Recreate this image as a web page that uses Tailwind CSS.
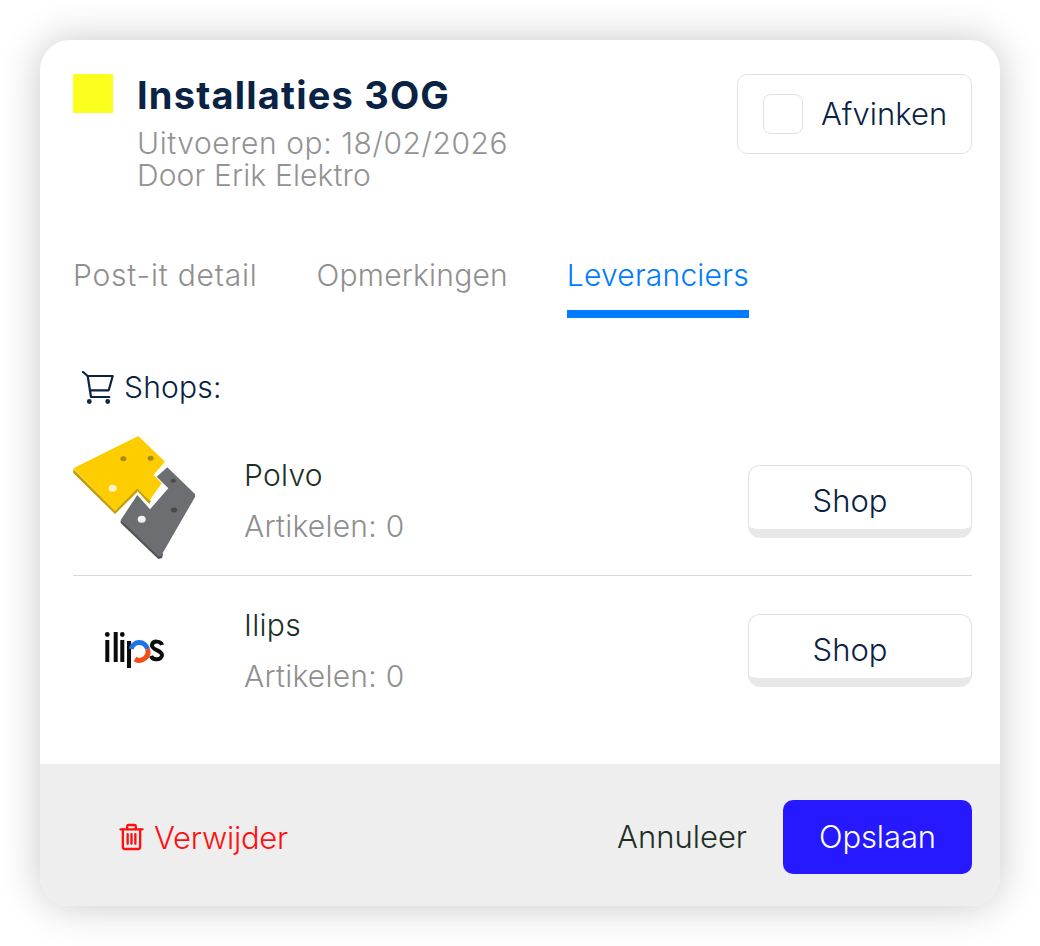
<!DOCTYPE html>
<html lang="en">
<head>
    <meta charset="UTF-8">
    <title>Post-it detail</title>
    <script src="https://cdn.jsdelivr.net/npm/@tailwindcss/browser@4"></script>
</head>
<body class="bg-white w-[1040px] h-[946px] overflow-hidden font-['Inter','Liberation_Sans',sans-serif]">
    <div class="pt-[40px] pl-[40px]">
        <div class="w-[960px] h-[866px] bg-white rounded-[30px] shadow-[0_0_40px_rgba(0,0,0,0.22)] overflow-hidden flex flex-col">
            <!-- Header -->
            <div class="flex justify-between pl-[33px] pr-[28px] pt-[34px] h-[190px]">
                <div class="flex gap-[24px]">
                    <div class="w-[40px] h-[39px] bg-[#fbff1e]"></div>
                    <div>
                        <h1 class="text-[38px] leading-[42px] font-bold text-[#0a2243] tracking-[1.2px]">Installaties 3OG</h1>
                        <p class="mt-[11px] text-[30px] leading-[32px] font-light text-[#939393]"><span class="block tracking-[0.55px]">Uitvoeren op: 18/02/2026</span><span class="block tracking-[0.13px]">Door Erik Elektro</span></p>
                    </div>
                </div>
                <label class="w-[235px] h-[80px] border border-[#e2e2e2] rounded-[10px] flex items-center pl-[25px] gap-[18px]">
                    <span class="w-[40px] h-[40px] border border-[#e2e2e2] rounded-[8px]"></span>
                    <span class="text-[31px] font-light text-[#0a2243]">Afvinken</span>
                </label>
            </div>
            <!-- Tabs -->
            <div class="flex gap-[59px] pl-[33px] pt-[27px] h-[88px] text-[30px] leading-[36px] font-light text-[#8f8f8f]">
                <div class="tracking-[0.8px]">Post-it detail</div>
                <div class="tracking-[0.2px]">Opmerkingen</div>
                <div class="h-[61px] border-b-[8px] border-[#007bff] text-[#007bff] tracking-[0.2px]">Leveranciers</div>
            </div>
            <!-- Shops -->
            <div class="flex items-center gap-[10px] pl-[42px] pt-[35px] h-[104px] text-[30px] font-light text-[#0a2243] tracking-[0.2px]">
                <svg class="w-[32px] h-[33px]" viewBox="0 0 32 33" fill="none" stroke="#0a2243" stroke-width="2.2" stroke-linecap="round" stroke-linejoin="round">
                    <path d="M1 1l4.700 4 3.300 21h18.300"/><path d="M5.700 5h25l-4 14.300H8"/>
                    <circle cx="7.300" cy="30.500" r="1.300"/><circle cx="25.700" cy="30.500" r="1.300"/>
                </svg>
                <span>Shops:</span>
            </div>
            <div class="mt-[4px] ml-[33px] mr-[28px]">
                <div class="flex items-center h-[150px] border-b border-[#d9d9d9]">
                    <svg class="mb-[5px] w-[124px] h-[124px] shrink-0" viewBox="0 0 124 124">
                        <path d="M0.300 33V37L42 78 64.300 56V52.300L42 74.700zM64.300 52.300V55L76.300 68 78 65z" fill="#c59f00"/>
                        <path d="M0.300 32.300 65.300 0 92 25.700 80.300 39 88.700 47.300 76.300 64.700 64.300 52.300 42 74.700z" fill="#fdcd00"/>
                        <path d="M47.700 84V87L85.300 123 89 122 90 118z" fill="#4f5052"/>
                        <path d="M94.300 31.300 122 58 122 61 88 120 85.300 120.500 47.700 84 64.300 59 77 73.300 95.300 52.300 83.700 40.700z" fill="#6d6e71"/>
                        <ellipse cx="39.700" cy="52.300" rx="4" ry="3.500" fill="#fff4c4"/>
                        <ellipse cx="50.300" cy="22.700" rx="3" ry="2.500" fill="#a98a12"/>
                        <ellipse cx="77.700" cy="22.300" rx="3" ry="2.500" fill="#a98a12"/>
                        <ellipse cx="68.700" cy="83.300" rx="4" ry="3.500" fill="#f2f2f2"/>
                        <ellipse cx="101" cy="74" rx="3" ry="2.500" fill="#47484a"/>
                        <ellipse cx="100.300" cy="44.700" rx="2.500" ry="2" fill="#47484a"/>
                    </svg>
                    <div class="ml-[47px] flex-1 font-light text-[30px] leading-[36px]">
                        <div class="text-[#1d2f25] tracking-[0.3px]">Polvo</div>
                        <div class="mt-[15px] text-[#8f8f8f] tracking-[0.25px]">Artikelen: 0</div>
                    </div>
                    <button class="mt-[2px] w-[224px] h-[73px] pr-[20px] pt-[8px] bg-white border border-[#e2e2e2] border-b-[9px] border-b-[#e8e8e8] rounded-[12px] text-[31px] font-light text-[#0a2243]">Shop</button>
                </div>
                <div class="flex items-center h-[148px]">
                    <div class="w-[124px] shrink-0 flex justify-center pr-[2px]">
                        <svg class="w-[60px] h-[36px]" viewBox="0 0 60 36">
                            <path d="M3.300 8v22M11.700 0v30M18.300 8v22M25 9v27" stroke="#0b0b0b" stroke-width="4" fill="none"/>
                            <circle cx="3.300" cy="2.500" r="2.400" fill="#0b0b0b"/><circle cx="18.300" cy="2.500" r="2.400" fill="#0b0b0b"/>
                            <path d="M27 17A8.500 8.500 0 0 1 43.500 17" stroke="#1a73e8" stroke-width="5" fill="none"/>
                            <path d="M43.500 17A8.500 8.500 0 0 1 31 27" stroke="#f04e14" stroke-width="5" fill="none"/>
                            <path d="M58 13c-1-4-9-5-10 0s10 5 10 10-9 6-11 1" stroke="#0b0b0b" stroke-width="4" fill="none"/>
                        </svg>
                    </div>
                    <div class="ml-[47px] flex-1 font-light text-[30px] leading-[36px]">
                        <div class="text-[#1d2f25] tracking-[0.3px]">Ilips</div>
                        <div class="mt-[15px] text-[#8f8f8f] tracking-[0.25px]">Artikelen: 0</div>
                    </div>
                    <button class="w-[224px] h-[73px] pr-[20px] pt-[8px] bg-white border border-[#e2e2e2] border-b-[9px] border-b-[#e8e8e8] rounded-[12px] text-[31px] font-light text-[#0a2243]">Shop</button>
                </div>
            </div>
            <!-- Footer -->
            <div class="mt-auto h-[142px] bg-[#eeeeee] flex items-center pl-[79px] pr-[28px] pt-[4px] text-[31px] font-light">
                <button class="flex items-center gap-[10px] text-[#ff1010]">
                    <svg class="w-[25px] h-[28px]" viewBox="0 0 26 28" fill="none" stroke="#ff1010" stroke-width="2.400" stroke-linecap="round" stroke-linejoin="round">
                        <path d="M1.500 6h23"/><path d="M8.500 6V3a1.500 1.500 0 0 1 1.500-1.500h6A1.500 1.500 0 0 1 17.500 3v3"/>
                        <path d="M4 6v18.500A2 2 0 0 0 6 26.500h14a2 2 0 0 0 2-2V6"/><path d="M9 11v10M13 11v10M17 11v10"/>
                    </svg>
                    <span class="mt-[2px] tracking-[-0.25px]">Verwijder</span>
                </button>
                <button class="ml-auto text-[#1d2f25]">Annuleer</button>
                <button class="ml-[36px] w-[189px] h-[74px] bg-[#2618ff] rounded-[10px] text-white tracking-[-0.1px]">Opslaan</button>
            </div>
        </div>
    </div>
</body>
</html>
